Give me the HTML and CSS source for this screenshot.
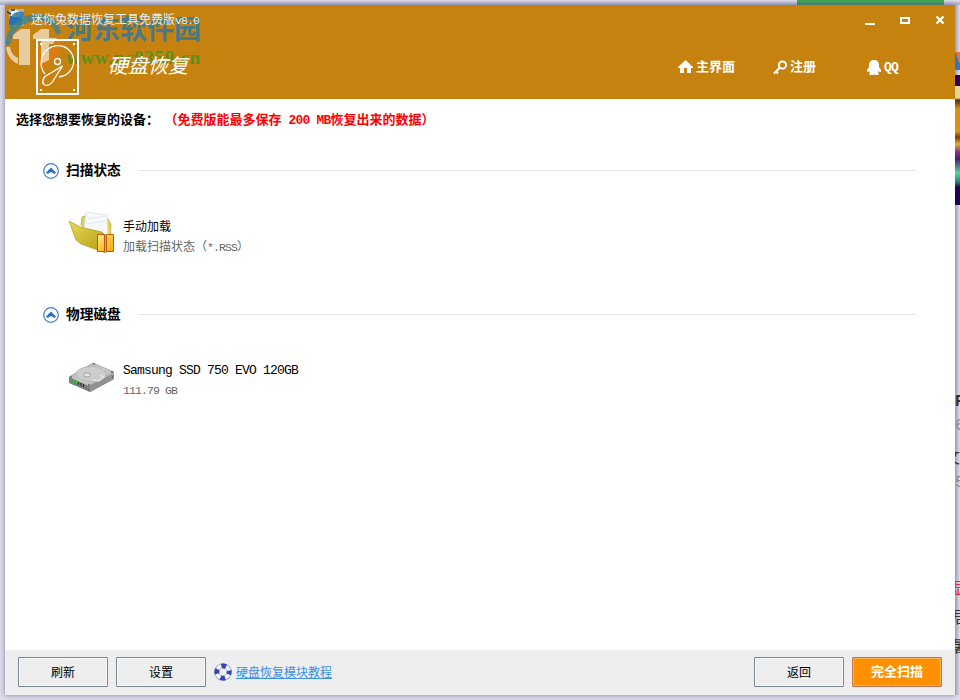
FILE: index.html
```html
<!DOCTYPE html>
<html lang="zh-CN">
<head>
	<meta charset="utf-8">
	<title>迷你兔数据恢复工具免费版v8.0</title>
	<link rel="stylesheet" href="styles.css">
</head>
<body>
	<div class="desktop-top"><span class="green-bar"></span></div>
	<div class="window">
		<div class="header">
			<div class="titlebar">
				<svg class="app-icon" width="18" height="18" viewBox="0 0 18 18">
					<path d="M2 1h15v17H2z" fill="#a9b5b5"/>
					<path d="M3 8l9 1 5 2-3 6H4l-2-2z" fill="#2068ad"/>
					<path d="M4 3c3-2 8-1 9 2 0 3-3 4-6 4S3 6 4 3z" fill="#f4f4f4"/>
					<path d="M7 5l6-1-3 4z" fill="#f5a623"/>
					<path d="M0 4l4 2M4 2h4" stroke="#174571" stroke-width="1.500"/>
				</svg>
				<span class="title">迷你兔数据恢复工具免费版<span class="mono">v8.0</span></span>
				<div class="controls">
					<svg width="10" height="10"><path d="M0 8h10v2H0z" fill="#fff"/></svg>
					<svg width="10" height="10"><path d="M1 3h8v5H1z" fill="none" stroke="#fff" stroke-width="2"/></svg>
					<svg width="10" height="10"><path d="M1.500 1.500l7 7M8.500 1.500l-7 7" stroke="#fff" stroke-width="2.200"/></svg>
				</div>
			</div>
			<div class="banner">
				<svg class="hdd" width="43" height="56" viewBox="0 0 43 56" fill="none" stroke="#fff">
					<rect x="1" y="1" width="41" height="54" stroke-width="2"/>
					<path d="M9 35C3 28 4 16 12 10 20 4 31 6 36 15c5 10-1 21-13 23" stroke-width="1.300"/>
					<circle cx="21.500" cy="22.500" r="3" stroke-width="1.300"/>
					<path d="M26.500 27L9 37.500C6 41 6 45 9 46s6-1 8-4z" stroke-width="1.300"/>
					<path d="M4 5h2M37 5h2M4 51h2M37 51h2" stroke-width="2"/>
				</svg>
				<span class="module">硬盘恢复</span>
				<div class="nav">
					<a class="nav-home"><svg width="15" height="14" viewBox="0 0 15 14"><path d="M7.500 0L15 7v1h-2v5H9V8H6v5H2V8H0V7z" fill="#fff"/></svg>主界面</a>
					<a class="nav-key"><svg width="15" height="15" viewBox="0 0 15 15"><circle cx="9.500" cy="5" r="3.600" fill="none" stroke="#fff" stroke-width="2"/><path d="M7 7.500L1 13.500M3 11.500l2 2" stroke="#fff" stroke-width="2.200"/></svg>注册</a>
					<a class="nav-qq"><svg width="14" height="15" viewBox="0 0 14 15"><path d="M7 0c3 0 5 2 5 5v2l2 3c0 2 0 2-1 2l-1-1-1 2 1 1-1 1H8l-1-1-1 1H3l-1-1 1-1-1-2-1 1c-1 0-1-1-1-2l2-3V5c0-3 2-5 5-5z" fill="#fff"/></svg><span class="mono">QQ</span></a>
				</div>
			</div>
			<div class="watermark">
				<svg width="58" height="58" viewBox="0 0 58 58">
					<path d="M19 1C12 -1 6 3 4 10c-1 6 2 8 7 7 3-1 5-4 9-5z" fill="#2577b3"/>
					<path d="M1 34C0 19 12 5 30 3c14-1 24 6 26 19l-5 2C49 13 40 8 29 10 16 12 7 21 5 34z" fill="#3c8590"/>
					<path d="M56 24c3 19-9 31-25 31V43c10 1 20-6 25-19z" fill="#e17a12"/>
					<path d="M1 36h4c1 6 4 9 8 11v6C6 50 2 44 1 36z" fill="#f0dfc2"/>
					<path d="M8 28v-4l8-6h9v36H14V28zM28 28v-4l8-6h8v9h8l-4 6h-4v16l-8 4V28z" fill="#f0dfc2"/>
				</svg>
				<div class="watermark-text">
					<div class="site-name">河东软件园</div>
					<div class="site-url">www.pc0359.cn</div>
				</div>
			</div>
		</div>

		<div class="content">
			<div class="prompt">选择您想要恢复的设备：<span class="limit">（免费版能最多保存<span class="mono"> 200 MB</span>恢复出来的数据）</span></div>

			<div class="section">
				<div class="section-head">
					<svg width="16" height="16" viewBox="0 0 16 16"><circle cx="8" cy="8" r="7.300" fill="#fff" stroke="#3c7fc8" stroke-width="1.200"/><path d="M3 9.500L8 4.500l5 5-1.500 1.500L8 9l-3.500 2z" fill="#2c72c0"/></svg>
					<h2>扫描状态</h2>
					<span class="line"></span>
				</div>
				<div class="item">
					<svg width="48" height="48" viewBox="0 0 48 48">
						<defs>
							<linearGradient id="folder" x1="0" y1="0" x2="1" y2="1"><stop offset="0" stop-color="#e6d95a"/><stop offset="1" stop-color="#b59c0c"/></linearGradient>
							<linearGradient id="box" x1="0" y1="0" x2="1" y2="1"><stop offset="0" stop-color="#ffe9a0"/><stop offset=".5" stop-color="#ffc43a"/><stop offset="1" stop-color="#f5a51a"/></linearGradient>
						</defs>
						<path d="M13 13l1-8 3-1 23 3 3 5-1 26-6 2z" fill="#e0d35c" stroke="#b09c1e" stroke-width=".6"/>
						<path d="M16 16l2-16 21 3 1 24-20 3z" fill="#f5f9fc" stroke="#d3dfe7" stroke-width=".7"/>
						<path d="M20 7l17-3M19 12l18-3" stroke="#e3ecf2"/>
						<path d="M1 9l11 6 22 5 4 4v17L13 32 8 28z" fill="url(#folder)" stroke="#b19a16" stroke-width=".7"/>
						<path d="M29.500 22.500h7v17h-7zM38.500 22.500h7v17h-7z" fill="url(#box)" stroke="#b45d08"/>
						<path d="M37.500 22v19" stroke="#e8a52a"/>
					</svg>
					<div class="item-text">
						<div class="item-name">手动加载</div>
						<div class="item-info">加载扫描状态（<span class="mono">*.RSS</span>）</div>
					</div>
				</div>
			</div>

			<div class="section">
				<div class="section-head">
					<svg width="16" height="16" viewBox="0 0 16 16"><circle cx="8" cy="8" r="7.300" fill="#fff" stroke="#3c7fc8" stroke-width="1.200"/><path d="M3 9.500L8 4.500l5 5-1.500 1.500L8 9l-3.500 2z" fill="#2c72c0"/></svg>
					<h2>物理磁盘</h2>
					<span class="line"></span>
				</div>
				<div class="item">
					<svg width="48" height="48" viewBox="0 0 48 48">
						<defs>
							<linearGradient id="disk" x1="0" y1="0" x2="1" y2="1"><stop offset="0" stop-color="#a5a5a5"/><stop offset=".5" stop-color="#d0d0cd"/><stop offset="1" stop-color="#a5a5a5"/></linearGradient>
						</defs>
						<path d="M1 21l20 9 25-13v6L22 36 1 27z" fill="#777c7d"/>
						<path d="M21 30l25-13v6L22 36z" fill="#8e9292"/>
						<path d="M1 21L25 7l21 9-25 14z" fill="url(#disk)" stroke="#8b8f8f" stroke-width=".6"/>
						<ellipse cx="23" cy="18" rx="15" ry="7.500" fill="#ccccca" stroke="#b0b0b0" stroke-width=".7"/>
						<ellipse cx="19" cy="19" rx="3.500" ry="2" fill="#e4e4e4" stroke="#888" stroke-width=".7"/>
						<path d="M25 24l6 1 5-4-4-2" fill="none" stroke="#e2e2e2" stroke-width="1.500"/>
						<path d="M5 24l4 1.500v3L5 27z" fill="#25c425"/>
						<path d="M10.500 26v3M13 27v3M15.500 28v3" stroke="#333" stroke-width="1.200"/>
						<path d="M2 21h2M25 8h2M43 16h2M20 29h2M20 34h1M44 21h1" stroke="#444" stroke-width="1.200"/>
					</svg>
					<div class="item-text">
						<div class="item-name mono">Samsung SSD 750 EVO 120GB</div>
						<div class="item-info mono">111.79 GB</div>
					</div>
				</div>
			</div>
		</div>

		<div class="footer">
			<button class="btn">刷新</button>
			<button class="btn">设置</button>
			<svg width="18" height="18" viewBox="0 0 18 18"><circle cx="9" cy="9" r="6.200" fill="none" stroke="#8d98d8" stroke-width="5"/><circle cx="9" cy="9" r="6.200" fill="none" stroke="#f4f5ff" stroke-width="3.600"/><circle cx="9" cy="9" r="6.200" fill="none" stroke="#3447b4" stroke-width="4.800" stroke-dasharray="4.870 4.870" stroke-dashoffset="2.430"/></svg>
			<a class="help">硬盘恢复模块教程</a>
			<button class="btn back">返回</button>
			<button class="btn scan">完全扫描</button>
		</div>
	</div>
	<div class="desktop-side">
		<div class="thumb thumb-blue"></div>
		<div class="thumb thumb-game"></div>
		<div class="peek peek-dark">R</div>
		<div class="peek peek-gray">6</div>
		<div class="peek peek-mid">文</div>
		<div class="peek peek-gray">5</div>
		<div class="peek peek-red">显</div>
		<div class="peek peek-news">居</div>
		<div class="peek peek-news">暑</div>
	</div>
</body>
</html>
```

FILE: styles.css
```css
body {
  margin: 0;
  width: 960px;
  height: 700px;
  display: grid;
  grid-template: 5px 690px / 5px 950px 5px;
  overflow: hidden;
  background: #dcdce8;
  font-family: "Liberation Mono", "Noto Sans CJK SC", monospace;
  font-size: 12px;
}

/* 6px wide latin letters beside 12px chinese ones */
.mono {
  font-family: "Liberation Mono", monospace;
  font-size: 11.5px;
  letter-spacing: -.9px;
}

.desktop-top {
  grid-column: 1 / 4;
  display: flex;
  justify-content: flex-end;
  padding-right: 16px;
  background: linear-gradient(#dfdfe9, #a5a5c0);
}

.green-bar {
  width: 147px;
  background: linear-gradient(#3da650 20%, #2a7548);
}

.window {
  grid-column: 2;
  display: flex;
  flex-direction: column;
  background: #fff;
  box-shadow: 0 0 5px #7f7ca3;
}

/* Header */
.header {
  position: relative;
  height: 94px;
  background: #c6820e;
  color: #fff;
}

.titlebar {
  display: flex;
  height: 30px;
}

.app-icon {
  margin: 3px 6px 0 2px;
}

/* keep the captions readable over the watermark */
.title,
.hdd,
.module {
  position: relative;
  z-index: 1;
}

.title {
  color: #e6eef0;
  line-height: 31px;
  white-space: nowrap;
}

.controls {
  display: flex;
  gap: 25px;
  margin: 10px 10px 0 auto;
}

.banner {
  display: flex;
  align-items: flex-start;
  padding-left: 31px;
}

.hdd {
  margin-top: 4px;
}

.module {
  margin-left: 29px;
  line-height: 66px;
  font-size: 20px;
  font-style: italic;
}

.nav {
  display: flex;
  margin: 23px 57px 0 auto;
  font-size: 13px;
  font-weight: bold;
  line-height: 20px;
}

.nav a {
  display: flex;
  align-items: center;
  gap: 3px;
}

.nav svg {
  margin-top: -2px;
}

.nav-key {
  margin-left: 38px;
}

.nav-key svg {
  margin-right: -1px;
}

.nav-qq {
  margin-left: 51px;
}

.nav-qq .mono,
.prompt .mono,
.item-name.mono {
  font-size: 13px;
  letter-spacing: -.8px;
}

/* Watermark over the title */
.watermark {
  position: absolute;
  left: 0;
  top: 6px;
  display: flex;
  opacity: .8;
}

.watermark-text {
  margin-left: 3px;
}

.site-name {
  height: 27px;
  color: #2779ab;
  font-size: 27px;
  font-weight: bold;
  line-height: 42px;
}

.site-url {
  color: #3d9522;
  font: bold 19px/40px "Liberation Serif", serif;
  letter-spacing: .7px;
}

/* Content */
.content {
  flex: 1;
}

.prompt {
  padding: 12px 0 0 11px;
  font-size: 13px;
  font-weight: bold;
  line-height: 20px;
}

.prompt .mono {
  white-space: pre;
}

.limit {
  margin-left: 12px;
  color: #f00;
}

.section {
  height: 144px;
}

.prompt + .section {
  margin-top: 30px;
}

.section-head {
  display: flex;
  align-items: center;
  height: 20px;
  padding: 0 38px;
}

.section-head h2 {
  margin: 1px 17px 0 7px;
  font-size: 13.7px;
  line-height: 20px;
}

.line {
  flex: 1;
  height: 1px;
  margin-top: -1px;
  background: #e6e6e6;
}

.item {
  display: flex;
  gap: 7px;
  padding: 31px 0 0 63px;
}

.item-text {
  padding-top: 6px;
}

.item-name {
  line-height: 20px;
  color: #000;
}

.item-name.mono {
  line-height: 17px;
}

.item-info {
  line-height: 20px;
  color: #666;
}

.item-info.mono {
  line-height: 23px;
}

/* Footer */
.footer {
  display: flex;
  align-items: center;
  height: 44px;
  padding: 0 13px 1px;
  background: #eee;
}

.btn {
  width: 90px;
  height: 30px;
  margin-right: 8px;
  padding: 0 0 1px;
  border: 1px solid #768594;
  border-radius: 1px;
  background: #eee;
  box-shadow: inset 0 0 0 1px #fff;
  color: #000;
  font: 12px "Noto Sans CJK SC", sans-serif;
}

.help {
  margin-left: 4px;
  color: #3a8ee6;
  text-decoration: underline;
}

.back {
  margin-left: auto;
}

.scan {
  margin-right: 0;
  padding-bottom: 3px;
  border-color: #c0714f;
  background: #ff9100;
  box-shadow: inset 0 0 0 1px #ffb058;
  color: #fff;
  font-size: 13px;
  font-weight: bold;
}

/* Page showing past the right edge of the window */
.desktop-side {
  position: relative;
  z-index: 1;
  padding-top: 47px;
  overflow: hidden;
  background: linear-gradient(90deg, #9c9bb8, #dfdfe9);
}

.thumb-blue {
  height: 18px;
  margin-bottom: 5px;
  background: linear-gradient(70deg, #2f78bb 60%, #e07845 60%);
}

.thumb-game {
  height: 130px;
  margin-bottom: 185px;
  background: linear-gradient(#290066 0 11px, #e4d88c 11px 23px, #5b2c13 25px, #d89312 34px 57px, #76380f 62px, #e0b324 69px, #823386 77px, #4b1d75 84px, #54d5a4 98px, #27826f 107px, #240252 112px);
}

.peek {
  height: 24px;
  line-height: 24px;
  font-size: 16px;
  text-indent: 0;
  color: #333;
}

.peek-dark {
  font-weight: bold;
}

.peek-gray {
  color: #8c8c98;
}

.peek-mid {
  margin-top: 9px;
  text-indent: -11px;
}

.peek-red {
  margin-top: 83px;
  color: #e62a3d;
}

.peek-red,
.peek-news {
  text-indent: -3px;
}

.peek-news {
  margin-top: 5px;
}
```
